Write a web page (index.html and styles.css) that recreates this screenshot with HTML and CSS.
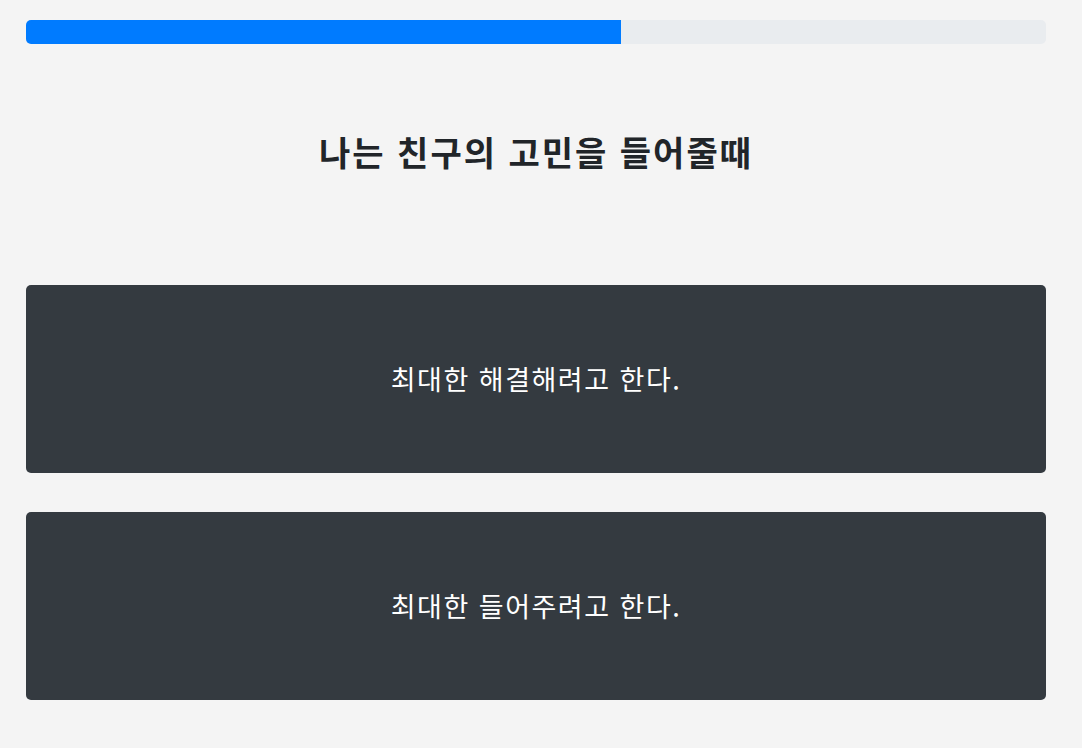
FILE: index.html
```html
<!DOCTYPE html>
<html lang="ko">
<head>
<meta charset="utf-8">
<link rel="stylesheet" href="styles.css">
</head>
<body>
<div class="page">
  <div class="progress"><div class="progress-bar" style="width:58.33%"></div></div>
  <h2 class="question">나는 친구의 고민을 들어줄때</h2>
  <div class="answers">
    <button class="answer">최대한 해결해려고 한다.</button>
    <button class="answer">최대한 들어주려고 한다.</button>
  </div>
</div>
</body>
</html>
```
FILE: styles.css
```css
html, body {
  margin: 0;
  padding: 0;
  background: #f4f4f4;
}
.page {
  padding: 20px 36px 0 26px;
  font-family: "Noto Sans CJK KR", "Noto Sans", sans-serif;
}
.progress {
  height: 24px;
  width: 1020px;
  background: #e9ecef;
  border-radius: 5px;
  overflow: hidden;
  display: flex;
}
.progress-bar {
  background: #007bff;
  height: 100%;
}
.question {
  margin: 0;
  display: flex;
  align-items: flex-start;
  justify-content: center;
  width: 1020px;
  font-size: 34px;
  letter-spacing: 2px;
  font-weight: 700;
  color: #212529;
  line-height: 46px;
  padding-top: 85px;
  box-sizing: border-box;
  height: 241px;
}
.answers {
  display: flex;
  flex-direction: column;
  gap: 39px;
  width: 1020px;
}
.answer {
  display: flex;
  align-items: center;
  justify-content: center;
  height: 188px;
  width: 100%;
  border: none;
  border-radius: 5px;
  background: #343a40;
  color: #ffffff;
  font-family: "Noto Sans CJK KR", "Noto Sans", sans-serif;
  font-size: 27px;
  letter-spacing: 1.5px;
  padding: 0 0 2px 0;
}
```
